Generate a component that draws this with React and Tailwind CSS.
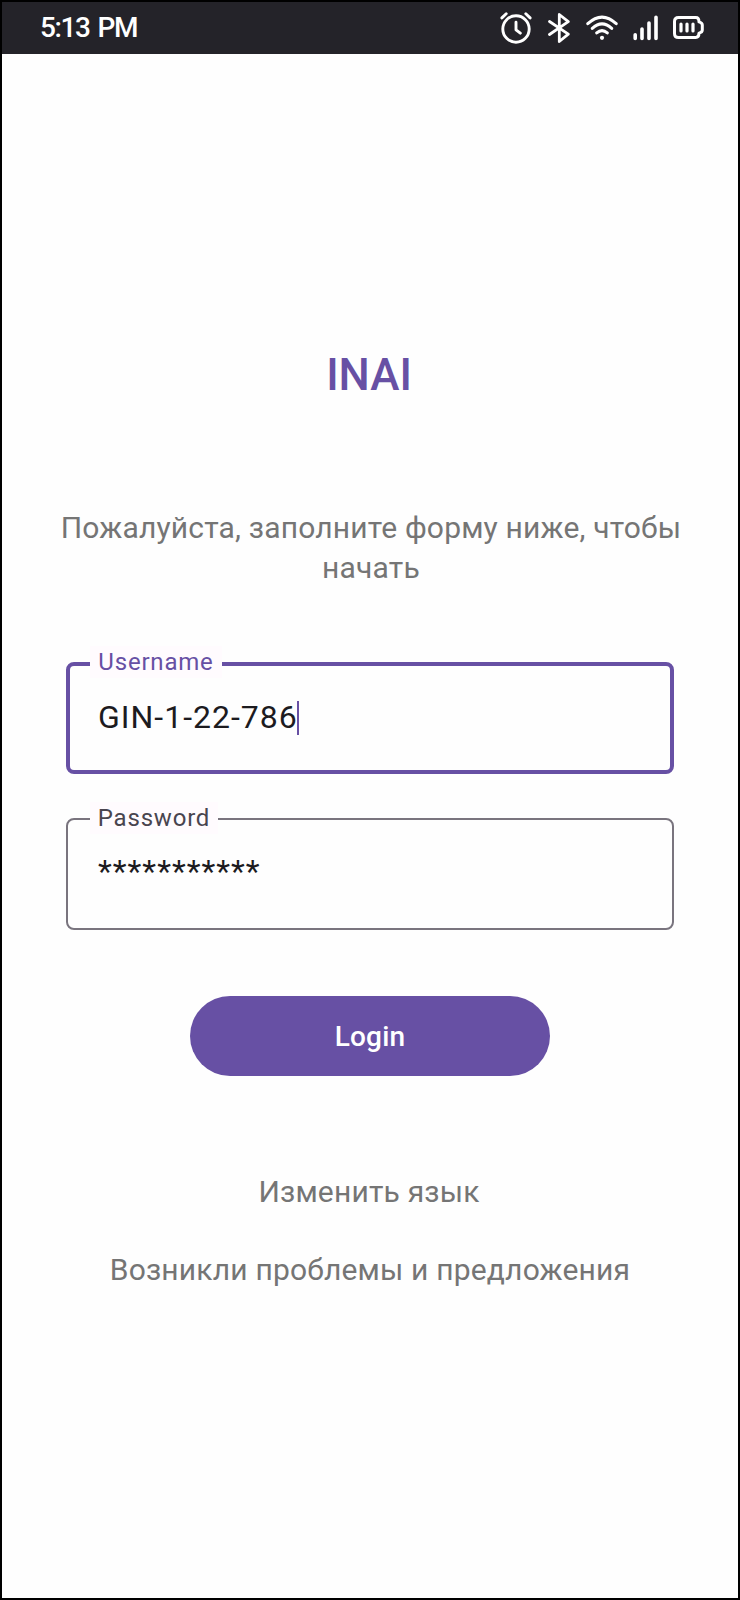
function AlarmIcon() {
  return (
    <svg width="32" height="34" viewBox="0 0 32 34" fill="none" stroke="#fff" strokeWidth="2.9" strokeLinecap="round" strokeLinejoin="round">
      <circle cx="16" cy="18" r="13.2" />
      <path d="M16 11.2v7.6l4.3 3.4M1.9 6.9l4.3-4.1M30.1 6.9l-4.3-4.1" />
    </svg>
  );
}

function BluetoothIcon() {
  return (
    <svg width="22" height="32" viewBox="0 0 22 32" fill="none" stroke="#fff" strokeWidth="2.8" strokeLinecap="round" strokeLinejoin="round">
      <path d="M1.5 9.5L20.3 22.2l-9 7.3V2.5l9 7.1L1.5 22.5" />
    </svg>
  );
}

function WifiIcon() {
  return (
    <svg width="32" height="26" viewBox="0 0 32 26" fill="none" stroke="#fff" strokeWidth="3" strokeLinecap="round">
      <path d="M1.8 8.7Q16-4.5 30.2 8.7M6.3 13.4q9.7-9 19.4 0M10.7 17.9q5.3-4.6 10.6 0" />
      <circle cx="16" cy="22.8" r="2.1" fill="#fff" stroke="none" />
    </svg>
  );
}

function SignalIcon() {
  return (
    <svg width="26" height="26" viewBox="0 0 26 26" fill="none" stroke="#fff" strokeWidth="3.6" strokeLinecap="round">
      <path d="M2.2 19.7v3.8M9 14v9.5M16 8v15.5M23 2.2v21.3" />
    </svg>
  );
}

function BatteryIcon() {
  return (
    <svg width="31" height="23" viewBox="0 0 31 23" fill="none" stroke="#fff" strokeWidth="3" strokeLinecap="round" strokeLinejoin="round">
      <path d="M5.5 1.5h17.3q3.2 0 3.2 4.4 3.3.8 3.3 3.1v5q0 2.3-3.3 3.1 0 4.4-3.2 4.4H5.5q-4 0-4-4v-12q0-4 4-4z" />
      <path d="M8 8v7M14 8v7M20 8v7" strokeWidth="3.2" />
    </svg>
  );
}

function StatusBar() {
  return (
    <header className="flex h-[52px] items-center justify-between bg-[#242329] pb-[1px] pl-[38px] pr-[34px] text-white">
      <span className="text-[28px] leading-8 font-medium tracking-[-1.4px] [word-spacing:2.5px]">5:13 PM</span>
      <div className="flex items-center">
        <AlarmIcon />
        <div className="ml-[16px]"><BluetoothIcon /></div>
        <div className="ml-[16px]"><WifiIcon /></div>
        <div className="ml-[15px]"><SignalIcon /></div>
        <div className="ml-[14px]"><BatteryIcon /></div>
      </div>
    </header>
  );
}

function Field({ label, value, focused }) {
  return (
    <div
      className={
        focused
          ? "relative h-28 w-[608px] rounded-lg border-4 border-[#6750a4] pt-[32px] pl-7"
          : "relative h-28 w-[608px] rounded-lg border-2 border-[#79747e] pt-[32px] pl-[30px]"
      }
    >
      <span
        className={
          focused
            ? "absolute top-[-20px] left-5 flex h-8 w-[132px] items-center justify-center bg-[#fffbfe] text-2xl tracking-[0.8px] text-[#6750a4]"
            : "absolute top-[-18px] left-[22px] flex h-8 w-[128px] items-center justify-center bg-[#fffbfe] text-2xl tracking-[0.8px] text-[#49454f]"
        }
      >
        {label}
      </span>
      <div className="flex items-center text-[32px] leading-[38px] tracking-[1px] text-[#1c1b1f]">
        {value}
        {focused && <span className="mt-[2px] -ml-px h-[34px] w-[2px] bg-[#6750a4]" />}
      </div>
    </div>
  );
}

export default function App() {
  return (
    <div className="h-[1600px] w-[740px] border-2 border-black bg-[#fefefe] font-['Roboto',sans-serif]">
      <StatusBar />
      <main className="flex flex-col items-center">
        <h1 className="mt-[295px] mr-[2px] text-[44px] leading-[52px] font-medium text-[#6750a4]">INAI</h1>
        <p className="mt-[107px] ml-[2px] w-[640px] text-center text-[30px] leading-10 tracking-[0.18px] text-[#757575]">
          Пожалуйста, заполните форму ниже, чтобы начать
        </p>
        <form className="mt-[74px] flex flex-col items-center gap-11">
          <Field label="Username" value="GIN-1-22-786" focused />
          <Field label="Password" value="***********" />
          <button type="button" className="mt-[22px] h-20 w-[360px] rounded-full bg-[#6750a4] pt-[2px] text-[28px] font-medium tracking-[0.2px] text-white">
            Login
          </button>
        </form>
        <a className="mt-24 mr-[2px] text-[30px] leading-10 tracking-[0.18px] text-[#757575]">Изменить язык</a>
        <a className="mt-[38px] text-[30px] leading-10 tracking-[0.18px] text-[#757575]">Возникли проблемы и предложения</a>
      </main>
    </div>
  );
}
